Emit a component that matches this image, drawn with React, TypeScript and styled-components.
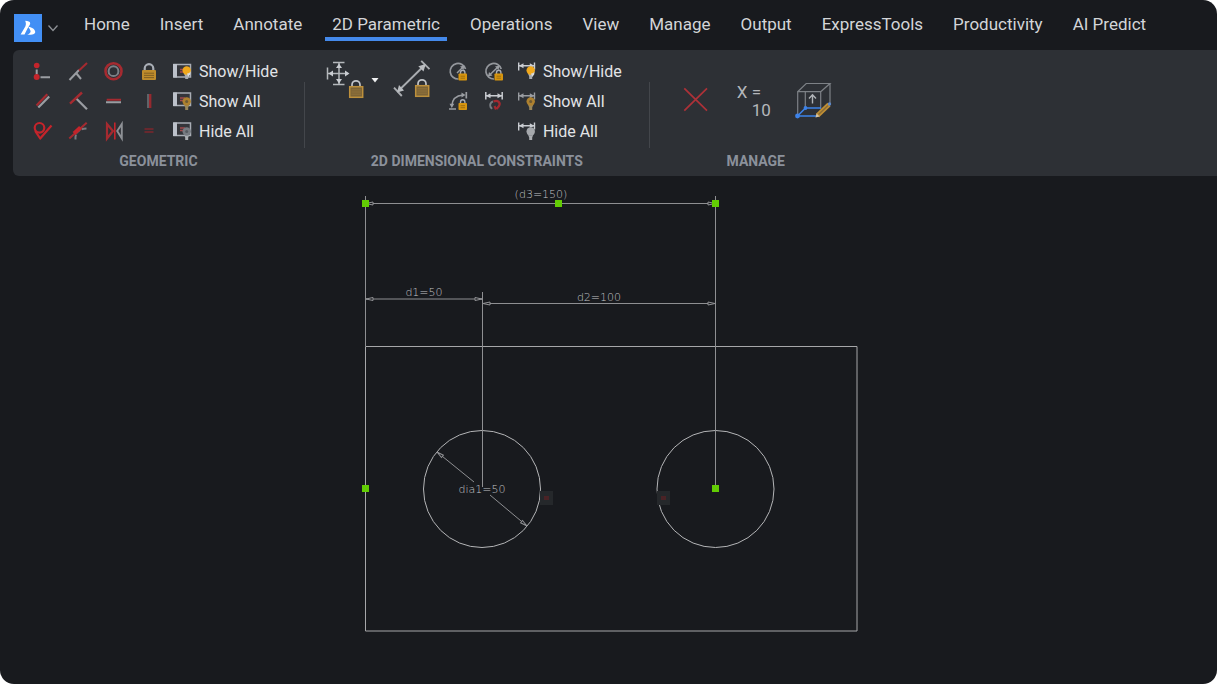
import React from "react";
import styled, { createGlobalStyle } from "styled-components";

const RED = "#c4242b";
const DIM_RED = "#a52a30";
const GRAY = "#9a9da2";
const LIGHT = "#c9ccd1";
const AMBER = "#c08f35";
const BLUE = "#3d82e8";

const GlobalStyle = createGlobalStyle`
  * { box-sizing: border-box; }
  body { margin: 0; background: #ffffff; font-family: Roboto, "Liberation Sans", sans-serif; }
  button { font: inherit; color: inherit; background: none; border: 0; padding: 0; margin: 0; cursor: pointer; }
  svg { display: block; }
`;

const Shell = styled.div`
  min-height: 100vh;
  display: flex;
  flex-direction: column;
  background: #181a1e;
  border-radius: 14px;
  overflow: hidden;
`;

const Header = styled.header`
  display: flex;
  align-items: flex-start;
  padding: 14px 14px 8px;
`;

const LogoButton = styled.button`
  width: 28px;
  height: 28px;
  background: #428ff5;
`;

const ChevronButton = styled.button`
  width: 22px;
  height: 28px;
  display: grid;
  place-items: center;
`;

const TabBar = styled.nav`
  display: flex;
  gap: 16px;
  margin-left: 13px;
`;

const Tab = styled.button<{ $active?: boolean }>`
  padding: 0 7px 2px;
  font-size: 17px;
  line-height: 21px;
  white-space: nowrap;
  color: #d3d5d8;
  border-bottom: 4px solid ${(p) => (p.$active ? "#4489ea" : "transparent")};
`;

const Ribbon = styled.section`
  display: flex;
  margin-left: 13px;
  padding: 6px 0;
  background: #2d3035;
  border-radius: 6px 0 0 6px;
`;

const Group = styled.section`
  display: flex;
  flex-direction: column;
`;

const GroupTools = styled.div<{ $left: number; $right: number }>`
  display: flex;
  height: 90px;
  padding: 0 ${(p) => p.$right}px 0 ${(p) => p.$left}px;
`;

const GroupTitle = styled.h2`
  margin: 6px 0 0;
  font-size: 14px;
  line-height: 18px;
  font-weight: 700;
  text-align: center;
  white-space: nowrap;
  color: #8b919b;
`;

const Divider = styled.div`
  width: 1px;
  height: 66px;
  margin-top: 26px;
  background: #43464b;
`;

const ToolGrid = styled.div<{ $columns: number }>`
  display: grid;
  grid-template-columns: repeat(${(p) => p.$columns}, 36px);
  grid-auto-rows: 30px;
`;

const ToolButton = styled.button`
  display: grid;
  place-items: center;
`;

const CommandList = styled.div<{ $gap: number }>`
  display: flex;
  flex-direction: column;
  margin-left: ${(p) => p.$gap}px;
`;

const Command = styled.button`
  display: flex;
  align-items: center;
  gap: 6px;
  height: 30px;
  font-size: 16px;
  line-height: 20px;
  white-space: nowrap;
  color: #e2e4e7;
`;

const CommandLabel = styled.span`
  padding-top: 2px;
`;

const LargeTools = styled.div<{ $gap: number; $top: number }>`
  display: flex;
  gap: ${(p) => p.$gap}px;
  padding-top: ${(p) => p.$top}px;
  margin-right: 8px;
`;

const SplitButton = styled.div`
  display: flex;
`;

const LargeButton = styled.button`
  width: 40px;
  height: 40px;
`;

const CaretButton = styled.button`
  width: 20px;
  height: 40px;
  display: grid;
  place-items: center;
`;

const ValueButton = styled(LargeButton)`
  display: flex;
  flex-direction: column;
  padding: 2px 3px;
  font-size: 17px;
  line-height: 18px;
  text-align: left;
  color: #b4b7bb;
`;

const ValueResult = styled.span`
  align-self: flex-end;
`;

const Canvas = styled.main`
  flex: 1;
  display: flex;
  justify-content: center;
`;

const Drawing = styled.svg`
  text {
    font-family: "DejaVu Sans", sans-serif;
    font-weight: 200;
    font-size: 11px;
    fill: #c2c3c6;
  }
`;

type IconProps = { children: React.ReactNode; size?: number };

function Icon({ children, size = 20 }: IconProps) {
  return (
    <svg width={size} height={size} viewBox={`0 0 ${size} ${size}`} fill="none" overflow="visible" aria-hidden="true">
      {children}
    </svg>
  );
}

const geometricTools: { name: string; art: React.ReactNode }[] = [
  {
    name: "Coincident",
    art: (
      <>
        <circle cx="5.7" cy="4.5" r="2.8" fill={RED} />
        <path d="M5.7 8.5v5" stroke={GRAY} strokeWidth="2" />
        <circle cx="5.7" cy="16" r="3" fill={RED} />
        <path d="M9.5 16.2h9.5" stroke={GRAY} strokeWidth="2" />
      </>
    ),
  },
  {
    name: "Collinear",
    art: (
      <>
        <path d="M2.5 19L12 9" stroke={GRAY} strokeWidth="2" />
        <path d="M12 9.5l8-7.5" stroke={DIM_RED} strokeWidth="2" />
        <path d="M9.5 12.5l4.5 5.5" stroke={GRAY} strokeWidth="2" />
      </>
    ),
  },
  {
    name: "Concentric",
    art: (
      <>
        <circle cx="10.5" cy="10.2" r="8" stroke={DIM_RED} strokeWidth="2.6" />
        <circle cx="10.5" cy="10.2" r="4.9" stroke="#7b8087" strokeWidth="2" />
      </>
    ),
  },
  {
    name: "Fix",
    art: (
      <>
        <path d="M5.7 10V7.5a4.3 4.3 0 0 1 8.6 0V10" stroke="#a9aeb6" strokeWidth="2.2" />
        <rect x="3" y="9" width="14" height="10" rx="1" fill="#bf8c2c" />
        <path d="M5 12.2h10M5 14.4h10M5 16.6h10" stroke="#7b5b22" strokeWidth="0.9" />
      </>
    ),
  },
  {
    name: "Parallel",
    art: (
      <>
        <path d="M5.5 14.5L16.3 3.3" stroke={DIM_RED} strokeWidth="2.2" />
        <path d="M7.3 16.6L18.2 5.5" stroke={GRAY} strokeWidth="2.2" />
      </>
    ),
  },
  {
    name: "Perpendicular",
    art: (
      <>
        <path d="M9 7.3l11 11" stroke={GRAY} strokeWidth="2.2" />
        <path d="M3 12.7L15 1.5" stroke={DIM_RED} strokeWidth="2.4" />
      </>
    ),
  },
  {
    name: "Horizontal",
    art: (
      <>
        <path d="M3.7 8.7H18" stroke={DIM_RED} strokeWidth="2" />
        <path d="M3 11.3h15" stroke={GRAY} strokeWidth="2" />
      </>
    ),
  },
  {
    name: "Vertical",
    art: (
      <>
        <path d="M9 3v14" stroke="#5f6368" strokeWidth="2" />
        <path d="M11.2 3v14" stroke="#95292f" strokeWidth="2.4" />
      </>
    ),
  },
  {
    name: "Tangent",
    art: (
      <>
        <circle cx="8.5" cy="6.8" r="4.8" stroke={RED} strokeWidth="2.2" />
        <path d="M4.2 10l5 7.5L20.5 4.5" stroke={RED} strokeWidth="2.2" strokeLinejoin="round" />
      </>
    ),
  },
  {
    name: "Smooth",
    art: (
      <>
        <path d="M8.5 18.5C8 12 11 7.5 20 7.5" stroke="#777b80" strokeWidth="2" strokeDasharray="5 1.5" />
        <path d="M2.3 17.5L19.7 1.8" stroke={DIM_RED} strokeWidth="2" />
        <path d="M7 12.5l6.5-6" stroke={RED} strokeWidth="4" />
      </>
    ),
  },
  {
    name: "Symmetric",
    art: (
      <>
        <path d="M4 3l6 7-6 7.5z" stroke={DIM_RED} strokeWidth="2.2" />
        <path d="M11.8 1.5v17" stroke={RED} strokeWidth="1.6" />
        <path d="M18.8 3l-4.6 7 4.6 7.5z" stroke="#8d9095" strokeWidth="1.9" />
      </>
    ),
  },
  {
    name: "Equal",
    art: <path d="M5.5 8h9M5.5 11h9" stroke="#7c262c" strokeWidth="1.7" />,
  },
];

type BulbKind = "on" | "amber" | "off";

function Bulb({ kind }: { kind: BulbKind }) {
  const tone = kind === "on" ? "#f0a81c" : kind === "amber" ? "#ae812f" : "#777b81";
  const y = kind === "on" ? 9.5 : 10.5;
  return (
    <g>
      <path d={`M11 ${y + 3}h5.4l-1.2 3v2.6h-3v-2.6z`} fill={kind === "amber" ? "#9a8659" : "#a9acb0"} />
      <circle cx="13.7" cy={y} r="4.2" fill={tone} />
      {kind === "on" ? (
        <path d="M14 12.5a4 4 0 0 0 4-4.5l-.8 5.5-2 2.5z" fill="#d9dadc" />
      ) : (
        <circle cx="13.7" cy={y} r="1.5" fill={kind === "amber" ? "#6e5a35" : "#565a60"} />
      )}
    </g>
  );
}

function PanelBulbIcon({ kind }: { kind: BulbKind }) {
  const top = kind === "on" ? 3.5 : 2;
  return (
    <Icon>
      <rect x="1" y={top} width="16.5" height="12.5" stroke="#a9adb5" strokeWidth="1.5" fill="#34353a" />
      <rect x="0" y={top - 0.5} width="4" height="13.5" fill="#bcc1ca" />
      <path d={`M7 ${top + 5}h5M7 ${top + 7.5}h4`} stroke="#a24a4c" strokeWidth="1.4" />
      <Bulb kind={kind} />
    </Icon>
  );
}

function DimensionBulbIcon({ kind }: { kind: BulbKind }) {
  const line = kind === "amber" ? "#999ca1" : LIGHT;
  return (
    <Icon>
      <path d="M1.7 1.5v8M17.5 1.5v7M2 4.7h15" stroke={line} strokeWidth="1.4" />
      <path d="M2 4.7l4.5-2.5v5zM17.3 4.7l-4.5-2.5v5z" fill={line} />
      <Bulb kind={kind} />
      {kind === "off" && <circle cx="13.7" cy="10.5" r="4" fill="#a5a8ac" />}
    </Icon>
  );
}

function SmallLock({ x, y = 12 }: { x: number; y?: number }) {
  return (
    <g transform={`translate(${x} ${y})`}>
      <path d="M2 1v-1.5a2.2 2.2 0 0 1 4.4 0V1" stroke="#aaadb3" strokeWidth="1.4" />
      <rect x="0" y="0.5" width="8.5" height="7" rx="0.8" fill="#d7950f" />
      <path d="M2 3.2h4.5M2 5.2h4.5" stroke="#91660f" strokeWidth="0.8" />
    </g>
  );
}

function LargeLock({ x, y }: { x: number; y: number }) {
  return (
    <g transform={`translate(${x} ${y})`}>
      <path d="M3 6V3.8a4 4 0 0 1 8 0V6" stroke="#c3c6ca" strokeWidth="1.7" />
      <rect x="0.7" y="5.7" width="13" height="10.6" fill="#7d6437" stroke="#bd903c" strokeWidth="1.5" />
      <path d="M2.5 8.8h9.5M2.5 11h9.5M2.5 13.2h9.5" stroke="#94743a" strokeWidth="0.9" />
    </g>
  );
}

const dimensionTools: { name: string; art: React.ReactNode }[] = [
  {
    name: "Radius",
    art: (
      <>
        <path d="M16.5 8A7.8 7.8 0 1 0 9.5 18" stroke="#94979c" strokeWidth="1.7" />
        <path d="M8 12l6-6" stroke={GRAY} strokeWidth="1.5" />
        <path d="M15.5 4.5l-1 4.5-3.5-3.5z" fill={GRAY} />
        <SmallLock x={9.5} />
      </>
    ),
  },
  {
    name: "Diameter",
    art: (
      <>
        <path d="M16.2 8A7.8 7.8 0 1 0 9 18" stroke="#94979c" strokeWidth="1.7" />
        <path d="M3.5 15L13.5 5.5" stroke={GRAY} strokeWidth="1.5" />
        <path d="M14.5 4.5l-1 4.5-3.5-3.5zM3 15.5l1-4.5 3.5 3.5z" fill={GRAY} />
        <SmallLock x={9.5} />
      </>
    ),
  },
  {
    name: "Angular",
    art: (
      <>
        <path d="M0 18h7M17.3 1v6.5" stroke={GRAY} strokeWidth="1.7" />
        <path d="M2.8 15C3.2 8.5 7.5 4.5 14 4" stroke={GRAY} strokeWidth="1.6" />
        <path d="M16.5 4l-4-2.5v5zM2.8 17L.5 12.8h4.8z" fill={GRAY} />
        <SmallLock x={9.5} y={11.5} />
      </>
    ),
  },
  {
    name: "Convert",
    art: (
      <>
        <path d="M.8 1v7.5M17.2 1v7.5M1 4.7h16" stroke={LIGHT} strokeWidth="1.5" />
        <path d="M1 4.7l4.5-2.5v5zM17 4.7l-4.5-2.5v5z" fill={LIGHT} />
        <path d="M8 10.5a4 4 0 0 0-2.5 5.5l1.5 1.8" stroke="#777b80" strokeWidth="2" />
        <path d="M8.5 10.5c4.5-2 7.5 1.5 5.5 4.5l-2.5 3M9.5 15l1.5 3.5" stroke="#a3282f" strokeWidth="2.2" />
      </>
    ),
  },
];

function Arrow({ x, y, angle }: { x: number; y: number; angle: number }) {
  return <path d="M0 0l7-1.5v3z" stroke="#929396" fill="#181a1e" transform={`translate(${x} ${y}) rotate(${angle})`} />;
}

function Grip({ x, y }: { x: number; y: number }) {
  return <rect x={x - 3} y={y - 3} width="7" height="7" fill="#62cc04" />;
}

function EqualBadge({ x, y }: { x: number; y: number }) {
  return (
    <g>
      <rect x={x} y={y} width="13" height="14" fill="#25282b" />
      <path d={`M${x + 4} ${y + 6}h5M${x + 4} ${y + 8}h5`} stroke="#711f23" />
    </g>
  );
}

function PlateDrawing() {
  return (
    <Drawing width="501" height="464" viewBox="358 176 501 464" fill="none" role="img" aria-label="Plate with two holes">
      <path d="M365.5 346.5H857V631H365.5z" stroke="#a6a7a9" />
      <circle cx="482" cy="489" r="58.5" stroke="#b4b5b7" />
      <circle cx="715.5" cy="489" r="58.5" stroke="#b4b5b7" />

      <g stroke="#8e8f92">
        <path d="M365.5 196V346M715.5 196V488M482.5 292V487" />
        <path d="M366 203.5H715M366 299H482M483 303.5H715" />
        <path d="M437 452L474 482M490 495L527 526" />
      </g>
      <Arrow x={366} y={203.5} angle={0} />
      <Arrow x={715} y={203.5} angle={180} />
      <Arrow x={366} y={299} angle={0} />
      <Arrow x={482} y={299} angle={180} />
      <Arrow x={483} y={303.5} angle={0} />
      <Arrow x={715} y={303.5} angle={180} />
      <Arrow x={437} y={452} angle={39} />
      <Arrow x={527} y={526} angle={219} />

      <text x="541" y="198" textAnchor="middle">(d3=150)</text>
      <text x="424" y="296" textAnchor="middle">d1=50</text>
      <text x="599" y="301" textAnchor="middle">d2=100</text>
      <text x="482" y="493" textAnchor="middle">dia1=50</text>

      <EqualBadge x={540} y={491} />
      <EqualBadge x={657} y={491} />
      <Grip x={365} y={203} />
      <Grip x={558} y={203} />
      <Grip x={715} y={203} />
      <Grip x={365} y={488} />
      <Grip x={715} y={488} />
    </Drawing>
  );
}

const tabs = [
  "Home",
  "Insert",
  "Annotate",
  "2D Parametric",
  "Operations",
  "View",
  "Manage",
  "Output",
  "ExpressTools",
  "Productivity",
  "AI Predict",
];

const visibility: { label: string; kind: BulbKind }[] = [
  { label: "Show/Hide", kind: "on" },
  { label: "Show All", kind: "amber" },
  { label: "Hide All", kind: "off" },
];

export default function App() {
  return (
    <>
      <GlobalStyle />
      <Shell>
        <Header>
          <LogoButton aria-label="Application menu">
            <Icon size={28}>
              <path
                d="M11.2 6.8C14 7 16.2 7.5 16.2 9.2C16.2 11 14.5 12.5 13.5 14.5L10.5 20.5H6.6L11.3 12.5C12.2 10.5 12 9 11.2 6.8z"
                fill="#fff"
              />
              <path
                d="M14.5 13C18 13 21.2 15.5 21.2 18C21.2 20 19 20.8 13.2 20.8C15 20 16.8 18.8 16.6 17.2C16.4 15.8 15.4 14.8 14.5 13z"
                fill="#fff"
              />
            </Icon>
          </LogoButton>
          <ChevronButton aria-label="More">
            <svg width="12" height="8" viewBox="0 0 12 8" fill="none" aria-hidden="true">
              <path d="M1.5 1.5L6 6.5l4.5-5" stroke="#8d9095" strokeWidth="1.3" />
            </svg>
          </ChevronButton>
          <TabBar>
            {tabs.map((tab) => (
              <Tab key={tab} $active={tab === "2D Parametric"}>
                {tab}
              </Tab>
            ))}
          </TabBar>
        </Header>

        <Ribbon>
          <Group>
            <GroupTools $left={10} $right={26}>
              <ToolGrid $columns={4}>
                {geometricTools.map((tool) => (
                  <ToolButton key={tool.name} aria-label={tool.name}>
                    <Icon>{tool.art}</Icon>
                  </ToolButton>
                ))}
              </ToolGrid>
              <CommandList $gap={6}>
                {visibility.map((item) => (
                  <Command key={item.label}>
                    <PanelBulbIcon kind={item.kind} />
                    <CommandLabel>{item.label}</CommandLabel>
                  </Command>
                ))}
              </CommandList>
            </GroupTools>
            <GroupTitle>GEOMETRIC</GroupTitle>
          </Group>
          <Divider />
          <Group>
            <GroupTools $left={20} $right={27}>
              <LargeTools $gap={8} $top={4}>
                <SplitButton>
                  <LargeButton aria-label="Linear dimension">
                    <Icon size={40}>
                      <path d="M8 2.5h11.5M8 24.5h11.5M2.5 7.5v12M14 3v21M3 13.5h20" stroke="#b4b7bb" strokeWidth="1.5" />
                      <path d="M14 3.5l3 4.5h-6zM14 23.5l3-4.5h-6zM3.5 13.5l4.5-3v6zM24.5 13.5l-4.5-3v6z" fill={LIGHT} />
                      <LargeLock x={24} y={21} />
                    </Icon>
                  </LargeButton>
                  <CaretButton aria-label="Dimension types">
                    <svg width="8" height="5" viewBox="0 0 8 5" aria-hidden="true">
                      <path d="M0.5 0h7L4 4.5z" fill="#f0f1f2" />
                    </svg>
                  </CaretButton>
                </SplitButton>
                <LargeButton aria-label="Aligned dimension">
                  <Icon size={40}>
                    <path d="M4.3 32L32.3 4.5M1 27.7l7.8 8.3M28.2.8l8.3 8.3" stroke="#a9acb0" strokeWidth="1.9" />
                    <path d="M4 32.5l2-7.5 5 5.5zM32.8 4l-2.3 7.5-5.2-5.3z" fill="#b9bcc0" />
                    <LargeLock x={22} y={20} />
                  </Icon>
                </LargeButton>
              </LargeTools>
              <ToolGrid $columns={2}>
                {dimensionTools.map((tool) => (
                  <ToolButton key={tool.name} aria-label={tool.name}>
                    <Icon>{tool.art}</Icon>
                  </ToolButton>
                ))}
              </ToolGrid>
              <CommandList $gap={4}>
                {visibility.map((item) => (
                  <Command key={item.label}>
                    <DimensionBulbIcon kind={item.kind} />
                    <CommandLabel>{item.label}</CommandLabel>
                  </Command>
                ))}
              </CommandList>
            </GroupTools>
            <GroupTitle>2D DIMENSIONAL CONSTRAINTS</GroupTitle>
          </Group>
          <Divider />
          <Group>
            <GroupTools $left={26} $right={22}>
              <LargeTools $gap={18} $top={25}>
                <LargeButton aria-label="Delete constraints">
                  <Icon size={40}>
                    <path d="M8.3 7.3l22.7 22.4M31 7.3L8.3 29.7" stroke="#ad3138" strokeWidth="1.7" />
                  </Icon>
                </LargeButton>
                <ValueButton>
                  <span>X =</span>
                  <ValueResult>10</ValueResult>
                </ValueButton>
                <LargeButton aria-label="Edit block">
                  <Icon size={40}>
                    <path
                      d="M5.7 33V10.7h23V28M5.7 10.7l8.5-8.2H38l-9.3 8.2M38 2.5V22M13.3 10.7V26"
                      stroke="#7d8186"
                      strokeWidth="1.2"
                    />
                    <path d="M20.5 22.5V14M17 17.5l3.5-3.7 3.5 3.7" stroke="#b0b3b7" strokeWidth="1.4" />
                    <path d="M5.5 35l8-8H29M5.5 35H25" stroke={BLUE} strokeWidth="1.6" />
                    <path d="M25.5 34.5L37 23.5" stroke={AMBER} strokeWidth="4.6" />
                    <path d="M26.5 33.5L36 24.5" stroke="#8a6c35" strokeWidth="1.5" />
                    <path d="M23.5 36.5l1-4 3 3z" fill="#d5c6a8" />
                    <circle cx="5.5" cy="35" r="2.4" fill={BLUE} />
                    <circle cx="13.5" cy="27" r="1.9" fill={BLUE} />
                    <circle cx="37.5" cy="23" r="1.7" fill="#5d88c8" />
                  </Icon>
                </LargeButton>
              </LargeTools>
            </GroupTools>
            <GroupTitle>MANAGE</GroupTitle>
          </Group>
        </Ribbon>

        <Canvas>
          <PlateDrawing />
        </Canvas>
      </Shell>
    </>
  );
}
